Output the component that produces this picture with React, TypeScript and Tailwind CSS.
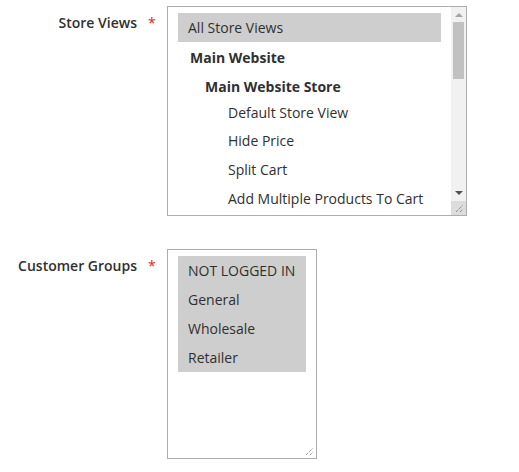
const STORE_ROWS = [
  { label: 'All Store Views', h: 'h-[29px]', indent: 'pl-[10px]', bold: false, selected: true },
  { label: 'Main Website', h: 'h-[30px]', indent: 'pl-[12px]', bold: true, selected: false },
  { label: 'Main Website Store', h: 'h-[28px]', indent: 'pl-[27px]', bold: true, selected: false },
  { label: 'Default Store View', h: 'h-[25px]', indent: 'pl-[50px]', bold: false, selected: false },
  { label: 'Hide Price', h: 'h-[30px]', indent: 'pl-[50px]', bold: false, selected: false },
  { label: 'Split Cart', h: 'h-[29px]', indent: 'pl-[50px]', bold: false, selected: false },
  { label: 'Add Multiple Products To Cart', h: 'h-[29px]', indent: 'pl-[50px]', bold: false, selected: false },
]

const GROUPS = ['NOT LOGGED IN', 'General', 'Wholesale', 'Retailer']

function Grip() {
  return (
    <svg width="9" height="9" viewBox="0 0 9 9" className="absolute bottom-[2px] right-[2px]">
      <path d="M1 8 L8 1 M5 8 L8 5" stroke="#6b6b6b" strokeWidth="1" strokeDasharray="1 1" />
    </svg>
  )
}

function FieldLabel({ text }: { text: string }) {
  return (
    <div className="flex shrink-0">
      <div className="w-[137px] pt-[7px] text-right text-[14px] font-semibold leading-[20px] text-[#303030]">
        {text}
      </div>
      <div className="w-[30px] pl-[11px] pt-[7px] text-[14px] leading-[20px] text-[#e22626]">*</div>
    </div>
  )
}

function Scrollbar() {
  return (
    <div className="flex w-[15px] shrink-0 flex-col bg-[#f1f1f1]">
      <div className="flex h-[15px] items-center justify-center">
        <svg width="8" height="5" viewBox="0 0 8 5">
          <path d="M0 5 L4 1 L8 5 Z" fill="#a3a3a3" />
        </svg>
      </div>
      <div className="mx-[2px] h-[57px] bg-[#c1c1c1]" />
      <div className="flex-1" />
      <div className="flex h-[15px] items-center justify-center">
        <svg width="8" height="5" viewBox="0 0 8 5">
          <path d="M0 0 L8 0 L4 4 Z" fill="#505050" />
        </svg>
      </div>
      <div className="relative h-[14px] bg-[#dcdcdc]">
        <Grip />
      </div>
    </div>
  )
}

export default function App() {
  return (
    <div className="min-h-[472px] w-[519px] bg-white pt-[6px] font-['Open_Sans',sans-serif] text-[14px] text-[#303030]">
      <div className="flex">
        <FieldLabel text="Store Views" />
        <div className="flex h-[210px] w-[300px] border border-[#adadad] bg-white">
          <div className="flex-1 overflow-hidden px-[10px] pt-[6px]">
            {STORE_ROWS.map((r) => (
              <div
                key={r.label}
                className={`flex items-center whitespace-nowrap ${r.h} ${r.indent} ${r.bold ? 'font-bold' : ''} ${
                  r.selected ? 'bg-[#cecece]' : ''
                }`}
              >
                {r.label}
              </div>
            ))}
          </div>
          <Scrollbar />
        </div>
      </div>

      <div className="mt-[33px] flex">
        <FieldLabel text="Customer Groups" />
        <div className="relative h-[210px] w-[150px] border border-[#adadad] bg-white px-[10px] pt-[6px]">
          {GROUPS.map((g) => (
            <div key={g} className="flex h-[29px] items-center bg-[#cecece] pl-[10px] whitespace-nowrap">
              {g}
            </div>
          ))}
          <Grip />
        </div>
      </div>
    </div>
  )
}
